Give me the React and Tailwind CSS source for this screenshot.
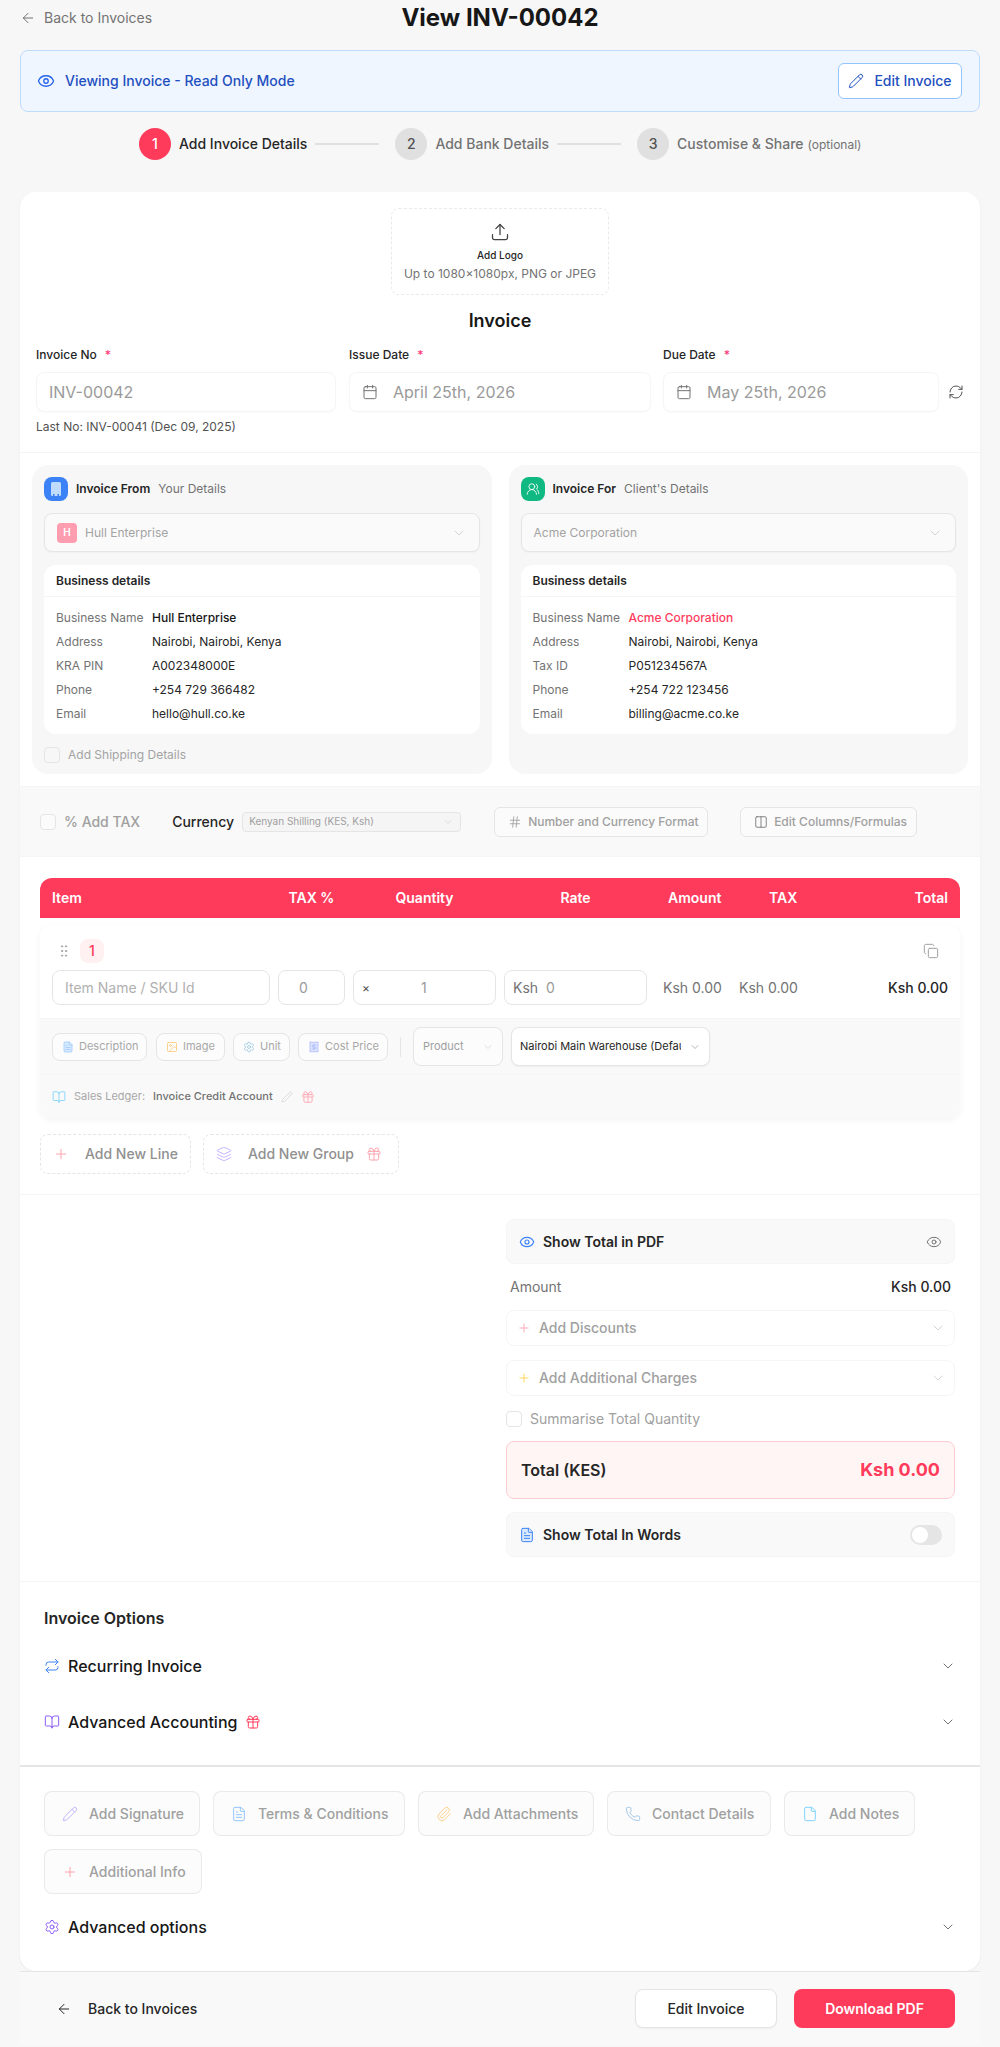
import {
  ArrowLeft, Eye, Pencil, Upload, Calendar, RefreshCw, UsersRound, ChevronDown, Hash, Columns2,
  GripVertical, Copy, FileText, Image, Settings, Receipt, BookOpen, Gift, Plus, Layers, Repeat, Paperclip,
  Phone, File,
} from "lucide-react"

const font = { fontFamily: "Inter, 'Liberation Sans', sans-serif" }

function Step({ n, label, active, note }) {
  return (
    <div className="flex items-center gap-2">
      <div className={`flex h-8 w-8 items-center justify-center rounded-full text-sm font-medium ${active ? "bg-[#ff3b5c] text-white" : "bg-[#e0e0e0] text-neutral-600"}`}>
        {n}
      </div>
      <span className={`whitespace-nowrap text-sm font-medium ${active ? "text-neutral-800" : "text-neutral-500"}`}>
        {label}
        {note && <span className="ml-1 text-xs font-normal">{note}</span>}
      </span>
    </div>
  )
}

function Field({ label, width, icon, value }) {
  return (
    <div className={`shrink-0 ${width}`}>
      <div className="flex h-4 items-center text-xs font-medium text-neutral-800">
        {label}
        <span className="ml-2 text-[#ff3b7c]">*</span>
      </div>
      <div className="mt-[9px] flex h-10 items-center gap-[15px] rounded-lg border border-neutral-100 bg-white pl-3 pr-3 text-base text-[#9a9a9a] shadow-[0_1px_2px_rgba(0,0,0,0.02)]">
        {icon && <Calendar className="h-4 w-4 text-neutral-500" strokeWidth={1.5} />}
        <span>{value}</span>
      </div>
    </div>
  )
}

function Panel({ icon, iconBg, title, sub, select, rows, nameRed, shipping, logo }) {
  return (
    <div className="h-[309px] rounded-2xl bg-[#f7f7f7] px-3 pt-3">
      <div className="flex h-6 items-center">
        <div className={`flex h-6 w-6 items-center justify-center rounded-lg ${iconBg}`}>{icon}</div>
        <span className="ml-2 text-xs font-semibold text-neutral-800">{title}</span>
        <span className="ml-2 text-xs text-neutral-500">{sub}</span>
      </div>
      <div className="mt-3 flex h-[39px] items-center rounded-lg border border-neutral-200 bg-[#fafafa] px-3 text-xs text-[#a3a3a3] shadow-[0_1px_2px_rgba(0,0,0,0.03)]">
        {logo && (
          <span className="mr-2 flex h-5 w-5 items-center justify-center rounded bg-[#ff9db0] text-[10px] font-semibold text-white">H</span>
        )}
        {select}
        <ChevronDown className="ml-auto h-4 w-4 text-neutral-300" strokeWidth={1.5} />
      </div>
      <div className="mt-[13px] h-[169px] rounded-xl bg-white">
        <div className="flex h-8 items-center border-b border-neutral-100 px-3 text-xs font-semibold text-neutral-800">Business details</div>
        <div className="flex flex-col gap-2 px-3 pt-[13px]">
          {rows.map(([k, v], i) => (
            <div key={k} className="flex h-4 items-center text-xs">
              <span className="w-24 shrink-0 text-neutral-500">{k}</span>
              <span className={i === 0 ? (nameRed ? "font-medium text-[#ff3b5c]" : "font-medium text-neutral-900") : "text-neutral-800"}>{v}</span>
            </div>
          ))}
        </div>
      </div>
      {shipping && (
        <div className="mt-[13px] flex h-4 items-center gap-2 text-xs text-[#a3a3a3]">
          <span className="h-4 w-4 rounded border border-neutral-200 bg-[#f7f7f7]" />
          Add Shipping Details
        </div>
      )}
    </div>
  )
}

function MiniChip({ icon, label, width }) {
  return (
    <div className={`flex h-7 items-center gap-[5px] rounded-lg border border-neutral-200 bg-[#fcfcfc] pl-[9px] text-[11px] text-[#a8a8a8] ${width}`}>
      {icon}
      {label}
    </div>
  )
}

function AddChip({ icon, label, width }) {
  return (
    <div className={`flex h-[45px] items-center gap-[11px] rounded-lg border border-neutral-200/80 bg-[#fcfcfc] pl-[17px] text-sm font-medium text-[#a0a0a0] ${width}`}>
      {icon}
      {label}
    </div>
  )
}

function OptionRow({ icon, label, children, className }) {
  return (
    <div className={`flex h-6 items-center ${className}`}>
      {icon}
      <span className="ml-2 text-base font-medium text-neutral-900">{label}</span>
      {children}
      <ChevronDown className="ml-auto h-4 w-4 text-neutral-500" strokeWidth={1.5} />
    </div>
  )
}

export default function App() {
  return (
    <div className="min-h-[2047px] bg-[#f7f7f7] px-5 pb-0.5" style={font}>
      {/* Page heading */}
      <div className="relative flex h-[35px] items-center justify-center">
        <div className="absolute left-0 flex items-center gap-2 text-sm text-neutral-500">
          <ArrowLeft className="h-4 w-4" strokeWidth={1.5} />
          <span>Back to Invoices</span>
        </div>
        <h1 className="text-2xl font-bold text-neutral-900">View INV-00042</h1>
      </div>

      {/* Read only banner */}
      <div className="mt-[15px] flex h-[62px] items-center rounded-lg border border-[#bfdbfe] bg-[#eff6ff] pl-4 pr-[17px]">
        <Eye className="h-[18px] w-[18px] text-[#2563eb]" strokeWidth={1.75} />
        <span className="ml-2.5 text-sm font-medium text-[#1e4fc0]">Viewing Invoice - Read Only Mode</span>
        <div className="ml-auto flex h-9 w-[124px] items-center justify-center gap-2.5 rounded-md border border-[#93c5fd] bg-white text-sm font-medium text-[#1e4fc0]">
          <Pencil className="h-4 w-4" strokeWidth={1.5} />
          Edit Invoice
        </div>
      </div>

      {/* Steps */}
      <div className="ml-[119px] mt-4 flex h-8 items-center">
        <Step n="1" label="Add Invoice Details" active />
        <div className="mx-2 h-0.5 w-16 bg-[#e0e0e0]" />
        <div className="ml-2"><Step n="2" label="Add Bank Details" /></div>
        <div className="mx-2 h-0.5 w-16 bg-[#e0e0e0]" />
        <div className="ml-2"><Step n="3" label="Customise & Share" note="(optional)" /></div>
      </div>

      {/* Invoice sheet */}
      <div className="mt-8 rounded-2xl bg-white shadow-[0_1px_3px_rgba(0,0,0,0.05)]">
        <div className="border-b border-neutral-100 px-4 pb-[17px] pt-4">
          <div className="mx-auto flex h-[87px] w-[218px] flex-col items-center rounded-lg border border-dashed border-neutral-200/80 pt-[13px]">
            <Upload className="h-5 w-5 text-neutral-700" strokeWidth={1.5} />
            <span className="mt-[5px] text-[10px] font-medium leading-4 text-neutral-800">Add Logo</span>
            <span className="mt-[3px] text-xs leading-4 text-neutral-500">Up to 1080×1080px, PNG or JPEG</span>
          </div>
          <h2 className="mt-3 text-center text-lg font-semibold leading-7 text-neutral-900">Invoice</h2>
          <div className="mt-3 flex items-end">
            <Field label="Invoice No" width="w-[300px]" value="INV-00042" />
            <Field label="Issue Date" width="ml-[13px] w-[302px]" icon value="April 25th, 2026" />
            <Field label="Due Date" width="ml-3 w-[276px]" icon value="May 25th, 2026" />
            <RefreshCw className="mb-3 ml-[9px] h-4 w-4 shrink-0 text-neutral-600" strokeWidth={1.5} />
          </div>
          <p className="mt-[7px] text-xs leading-4 text-neutral-600">Last No: INV-00041 (Dec 09, 2025)</p>
        </div>

        <div className="grid grid-cols-2 gap-[17px] px-3 pb-3 pt-3">
          <Panel
            icon={
              <svg width="14" height="16" viewBox="0 0 14 16">
                <rect x="2" y="1" width="10" height="14" rx="1.5" fill="#bfdbfe" />
                <rect x="4" y="13" width="1.5" height="2" fill="#3b82f6" />
                <rect x="8.5" y="13" width="1.5" height="2" fill="#3b82f6" />
              </svg>
            }
            iconBg="bg-[#3b82f6]"
            title="Invoice From"
            sub="Your Details"
            select="Hull Enterprise"
            logo
            shipping
            rows={[
              ["Business Name", "Hull Enterprise"],
              ["Address", "Nairobi, Nairobi, Kenya"],
              ["KRA PIN", "A002348000E"],
              ["Phone", "+254 729 366482"],
              ["Email", "hello@hull.co.ke"],
            ]}
          />
          <Panel
            icon={<UsersRound className="h-3.5 w-3.5 text-white" strokeWidth={1.5} />}
            iconBg="bg-[#10b981]"
            title="Invoice For"
            sub="Client's Details"
            select="Acme Corporation"
            nameRed
            rows={[
              ["Business Name", "Acme Corporation"],
              ["Address", "Nairobi, Nairobi, Kenya"],
              ["Tax ID", "P051234567A"],
              ["Phone", "+254 722 123456"],
              ["Email", "billing@acme.co.ke"],
            ]}
          />
        </div>

        {/* Table settings */}
        <div className="flex h-[71px] items-center border-y border-neutral-100 bg-[#f9f9f9] pl-5">
          <span className="h-4 w-4 rounded border border-neutral-200 bg-[#fbfbfb]" />
          <span className="ml-2 text-sm font-medium text-[#a0a0a0]">% Add TAX</span>
          <span className="ml-8 text-sm font-medium text-neutral-800">Currency</span>
          <div className="ml-2 flex h-5 w-[219px] items-center rounded border border-neutral-200 bg-[#f5f5f5] px-1.5 text-[10px] text-[#a0a0a0]">
            Kenyan Shilling (KES, Ksh)
            <ChevronDown className="ml-auto h-3 w-3 text-neutral-300" strokeWidth={1.5} />
          </div>
          <div className="ml-[33px] flex h-[30px] w-[214px] items-center gap-1.5 whitespace-nowrap rounded-md border border-neutral-200 bg-[#fbfbfb] pl-[13px] text-xs font-medium text-[#a0a0a0]">
            <Hash className="h-3.5 w-3.5 text-neutral-400" strokeWidth={1.5} />
            Number and Currency Format
          </div>
          <div className="ml-[32px] flex h-[30px] w-[177px] items-center gap-1.5 whitespace-nowrap rounded-md border border-neutral-200 bg-[#fbfbfb] pl-[13px] text-xs font-medium text-[#a0a0a0]">
            <Columns2 className="h-3.5 w-3.5 text-neutral-500" strokeWidth={1.5} />
            Edit Columns/Formulas
          </div>
        </div>

        {/* Line items */}
        <div className="px-5">
          <div className="mt-[21px] flex h-10 items-center rounded-t-xl bg-[#ff3b5c] px-3 text-sm font-semibold text-white">
            <span className="w-[226px]">Item</span>
            <span className="w-[67px] text-center">TAX %</span>
            <span className="ml-2 w-[143px] text-center">Quantity</span>
            <span className="ml-2 w-[143px] text-center">Rate</span>
            <span className="ml-[21px] w-[101px]">Amount</span>
            <span>TAX</span>
            <span className="flex-1 text-right">Total</span>
          </div>
          <div className="mt-[7px] overflow-hidden rounded-xl bg-white shadow-[0_2px_6px_rgba(0,0,0,0.05)]">
            <div className="px-3 pb-[13px] pt-[14px]">
              <div className="flex h-6 items-center">
                <GripVertical className="ml-1 h-4 w-4 text-neutral-400" strokeWidth={1.5} />
                <span className="ml-2 flex h-6 w-6 items-center justify-center rounded-lg bg-[#fff1f1] text-sm font-medium text-[#ff3b5c]">1</span>
                <Copy className="ml-auto mr-[9px] h-4 w-4 text-neutral-400" strokeWidth={1.5} />
              </div>
              <div className="mt-[7px] flex h-[35px] items-center text-sm">
                <div className="flex h-full w-[218px] items-center rounded-lg border border-neutral-200 px-3 text-[#b0b0b0]">Item Name / SKU Id</div>
                <div className="ml-2 flex h-full w-[67px] items-center rounded-lg border border-neutral-200 pl-5 text-[#9a9a9a]">0</div>
                <div className="ml-2 flex h-full w-[143px] items-center rounded-lg border border-neutral-200 pl-2 text-[#9a9a9a]">
                  <span className="text-xs text-neutral-600">×</span>
                  <span className="ml-[51px]">1</span>
                </div>
                <div className="ml-2 flex h-full w-[143px] items-center rounded-lg border border-neutral-200 pl-2 text-neutral-500">
                  Ksh<span className="ml-2 text-[#9a9a9a]">0</span>
                </div>
                <span className="ml-4 w-[76px] whitespace-nowrap text-neutral-500">Ksh 0.00</span>
                <span className="w-[60px] whitespace-nowrap text-neutral-500">Ksh 0.00</span>
                <span className="flex-1 text-right font-medium text-neutral-800">Ksh 0.00</span>
              </div>
            </div>
            <div className="flex h-[57px] items-center border-y border-neutral-100 bg-[#f9f9f9] pl-3 pr-3">
              <MiniChip width="w-[95px]" icon={<FileText className="h-3 w-3 fill-[#dbeafe] text-[#93c5fd]" strokeWidth={1.5} />} label="Description" />
              <div className="ml-[9px]"><MiniChip width="w-[69px]" icon={<Image className="h-3 w-3 text-[#fcc46d]" strokeWidth={1.5} />} label="Image" /></div>
              <div className="ml-2"><MiniChip width="w-[57px]" icon={<Settings className="h-3 w-3 text-[#93c5e0]" strokeWidth={1.5} />} label="Unit" /></div>
              <div className="ml-2"><MiniChip width="w-[90px]" icon={<Receipt className="h-3 w-3 fill-[#e0e7ff] text-[#a5b4fc]" strokeWidth={1.5} />} label="Cost Price" /></div>
              <div className="ml-3 h-5 w-px bg-neutral-200" />
              <div className="ml-3 flex h-[39px] w-[90px] items-center rounded-lg border border-neutral-200 bg-[#fcfcfc] pl-[9px] pr-2 text-[11px] text-[#a0a0a0]">
                Product
                <ChevronDown className="ml-auto h-3 w-3 text-neutral-300" strokeWidth={1.5} />
              </div>
              <div className="ml-2 flex h-[39px] w-[199px] items-center rounded-lg border border-neutral-200 bg-white pl-2 pr-2 text-[11px] text-neutral-800 shadow-[0_1px_2px_rgba(0,0,0,0.05)]">
                <span className="w-[161px] overflow-hidden whitespace-nowrap">Nairobi Main Warehouse (Default)</span>
                <ChevronDown className="ml-2 h-3 w-3 shrink-0 text-neutral-400" strokeWidth={1.5} />
              </div>
            </div>
            <div className="flex h-[43px] items-center bg-[#f9f9f9] pl-3 text-[11px]">
              <BookOpen className="h-3.5 w-3.5 text-[#7dd3fc]" strokeWidth={1.5} />
              <span className="ml-2 text-[#a8a8a8]">Sales Ledger:</span>
              <span className="ml-2 font-medium text-neutral-500">Invoice Credit Account</span>
              <Pencil className="ml-2 h-3 w-3 text-neutral-300" strokeWidth={1.5} />
              <Gift className="ml-2 h-3.5 w-3.5 text-[#fda4af]" strokeWidth={1.5} />
            </div>
          </div>
          <div className="mt-4 flex gap-3">
            <div className="flex h-10 w-[151px] items-center rounded-lg border border-dashed border-neutral-200 pl-3 text-sm font-medium text-[#909090]">
              <Plus className="h-4 w-4 text-[#fda4af]" strokeWidth={1.5} />
              <span className="ml-4">Add New Line</span>
            </div>
            <div className="flex h-10 w-[196px] items-center rounded-lg border border-dashed border-neutral-200 pl-3 text-sm font-medium text-[#909090]">
              <Layers className="h-4 w-4 text-[#c4b5fd]" strokeWidth={1.5} />
              <span className="ml-4">Add New Group</span>
              <Gift className="ml-3 h-4 w-4 text-[#fda4af]" strokeWidth={1.5} />
            </div>
          </div>
        </div>

        {/* Totals */}
        <div className="mt-5 flex justify-end border-y border-neutral-100 pb-6 pr-[25px] pt-6">
          <div className="w-[449px]">
            <div className="flex h-[45px] items-center rounded-lg border border-neutral-100 bg-[#f9f9f9] px-3 text-sm font-semibold text-neutral-800">
              <Eye className="h-4 w-4 text-[#3b82f6]" strokeWidth={1.75} />
              <span className="ml-2">Show Total in PDF</span>
              <Eye className="ml-auto h-4 w-4 text-neutral-500" strokeWidth={1.5} />
            </div>
            <div className="mt-[14px] flex h-[18px] items-center justify-between px-1 text-sm">
              <span className="text-neutral-500">Amount</span>
              <span className="font-medium text-neutral-800">Ksh 0.00</span>
            </div>
            <div className="mt-[14px] flex h-9 items-center rounded-lg border border-neutral-100 pl-2.5 pr-2 text-sm font-medium text-[#a0a0a0]">
              <Plus className="h-3.5 w-3.5 text-[#fda4af]" strokeWidth={1.5} />
              <span className="ml-2">Add Discounts</span>
              <ChevronDown className="ml-auto h-4 w-4 text-neutral-300" strokeWidth={1.5} />
            </div>
            <div className="mt-[14px] flex h-9 items-center rounded-lg border border-neutral-100 pl-2.5 pr-2 text-sm font-medium text-[#a0a0a0]">
              <Plus className="h-3.5 w-3.5 text-[#fcd34d]" strokeWidth={1.5} />
              <span className="ml-2">Add Additional Charges</span>
              <ChevronDown className="ml-auto h-4 w-4 text-neutral-300" strokeWidth={1.5} />
            </div>
            <div className="mt-[15px] flex h-4 items-center text-sm text-[#a0a0a0]">
              <span className="h-4 w-4 rounded border border-neutral-200" />
              <span className="ml-2">Summarise Total Quantity</span>
            </div>
            <div className="mt-[14px] flex h-[58px] items-center justify-between rounded-lg border border-[#fecdd3] bg-[#fff5f5] pl-[14px] pr-[14px]">
              <span className="text-base font-semibold text-neutral-800">Total (KES)</span>
              <span className="text-lg font-bold text-[#ff3b5c]">Ksh 0.00</span>
            </div>
            <div className="mt-[13px] flex h-[45px] items-center rounded-lg border border-neutral-100 bg-[#f9f9f9] px-3 text-sm font-semibold text-neutral-800">
              <FileText className="h-4 w-4 fill-[#dbeafe] text-[#3b82f6]" strokeWidth={1.5} />
              <span className="ml-2">Show Total In Words</span>
              <div className="ml-auto flex h-5 w-8 items-center rounded-full bg-[#e5e5e5] pl-0.5">
                <span className="h-4 w-4 rounded-full bg-white" />
              </div>
            </div>
          </div>
        </div>

        {/* Invoice options */}
        <div className="border-b-2 border-neutral-200 px-6 pb-[31px] pt-6">
          <h3 className="text-base font-semibold leading-6 text-neutral-800">Invoice Options</h3>
          <OptionRow className="mt-6" icon={<Repeat className="h-4 w-4 text-[#3b82f6]" strokeWidth={1.5} />} label="Recurring Invoice" />
          <OptionRow className="mt-8" icon={<BookOpen className="h-4 w-4 text-[#8b5cf6]" strokeWidth={1.5} />} label="Advanced Accounting">
            <Gift className="ml-2 h-4 w-4 text-[#ff3b5c]" strokeWidth={1.5} />
          </OptionRow>
        </div>

        <div className="px-6 pb-8 pt-6">
          <div className="flex flex-wrap gap-[13px]">
            <AddChip width="w-[156px]" icon={<Pencil className="h-4 w-4 text-[#c4b5fd]" strokeWidth={1.5} />} label="Add Signature" />
            <AddChip width="w-[192px]" icon={<FileText className="h-4 w-4 text-[#93c5fd]" strokeWidth={1.5} />} label="Terms & Conditions" />
            <AddChip width="w-[176px]" icon={<Paperclip className="h-4 w-4 text-[#fcd08a]" strokeWidth={1.5} />} label="Add Attachments" />
            <AddChip width="w-[164px]" icon={<Phone className="h-4 w-4 text-[#a5c8e8]" strokeWidth={1.5} />} label="Contact Details" />
            <AddChip width="w-[131px]" icon={<File className="h-4 w-4 text-[#7dd3fc]" strokeWidth={1.5} />} label="Add Notes" />
            <AddChip width="w-[158px]" icon={<Plus className="h-4 w-4 text-[#fda4af]" strokeWidth={1.5} />} label="Additional Info" />
          </div>
          <OptionRow className="mt-[21px]" icon={<Settings className="h-4 w-4 text-[#8b5cf6]" strokeWidth={1.5} />} label="Advanced options" />
        </div>
      </div>

      {/* Footer actions */}
      <div className="flex h-[74px] items-center border-t border-neutral-200 bg-[#f9f9f9] pl-9 pr-[25px]">
        <ArrowLeft className="h-4 w-4 text-neutral-800" strokeWidth={1.5} />
        <span className="ml-4 text-sm font-medium text-neutral-800">Back to Invoices</span>
        <div className="ml-auto flex h-[39px] w-[142px] items-center justify-center rounded-lg border border-neutral-200 bg-white text-sm font-medium text-neutral-800 shadow-[0_1px_2px_rgba(0,0,0,0.05)]">
          Edit Invoice
        </div>
        <div className="ml-[17px] flex h-[39px] w-[161px] items-center justify-center rounded-lg bg-[#ff3b5c] text-sm font-semibold text-white">
          Download PDF
        </div>
      </div>
    </div>
  )
}
